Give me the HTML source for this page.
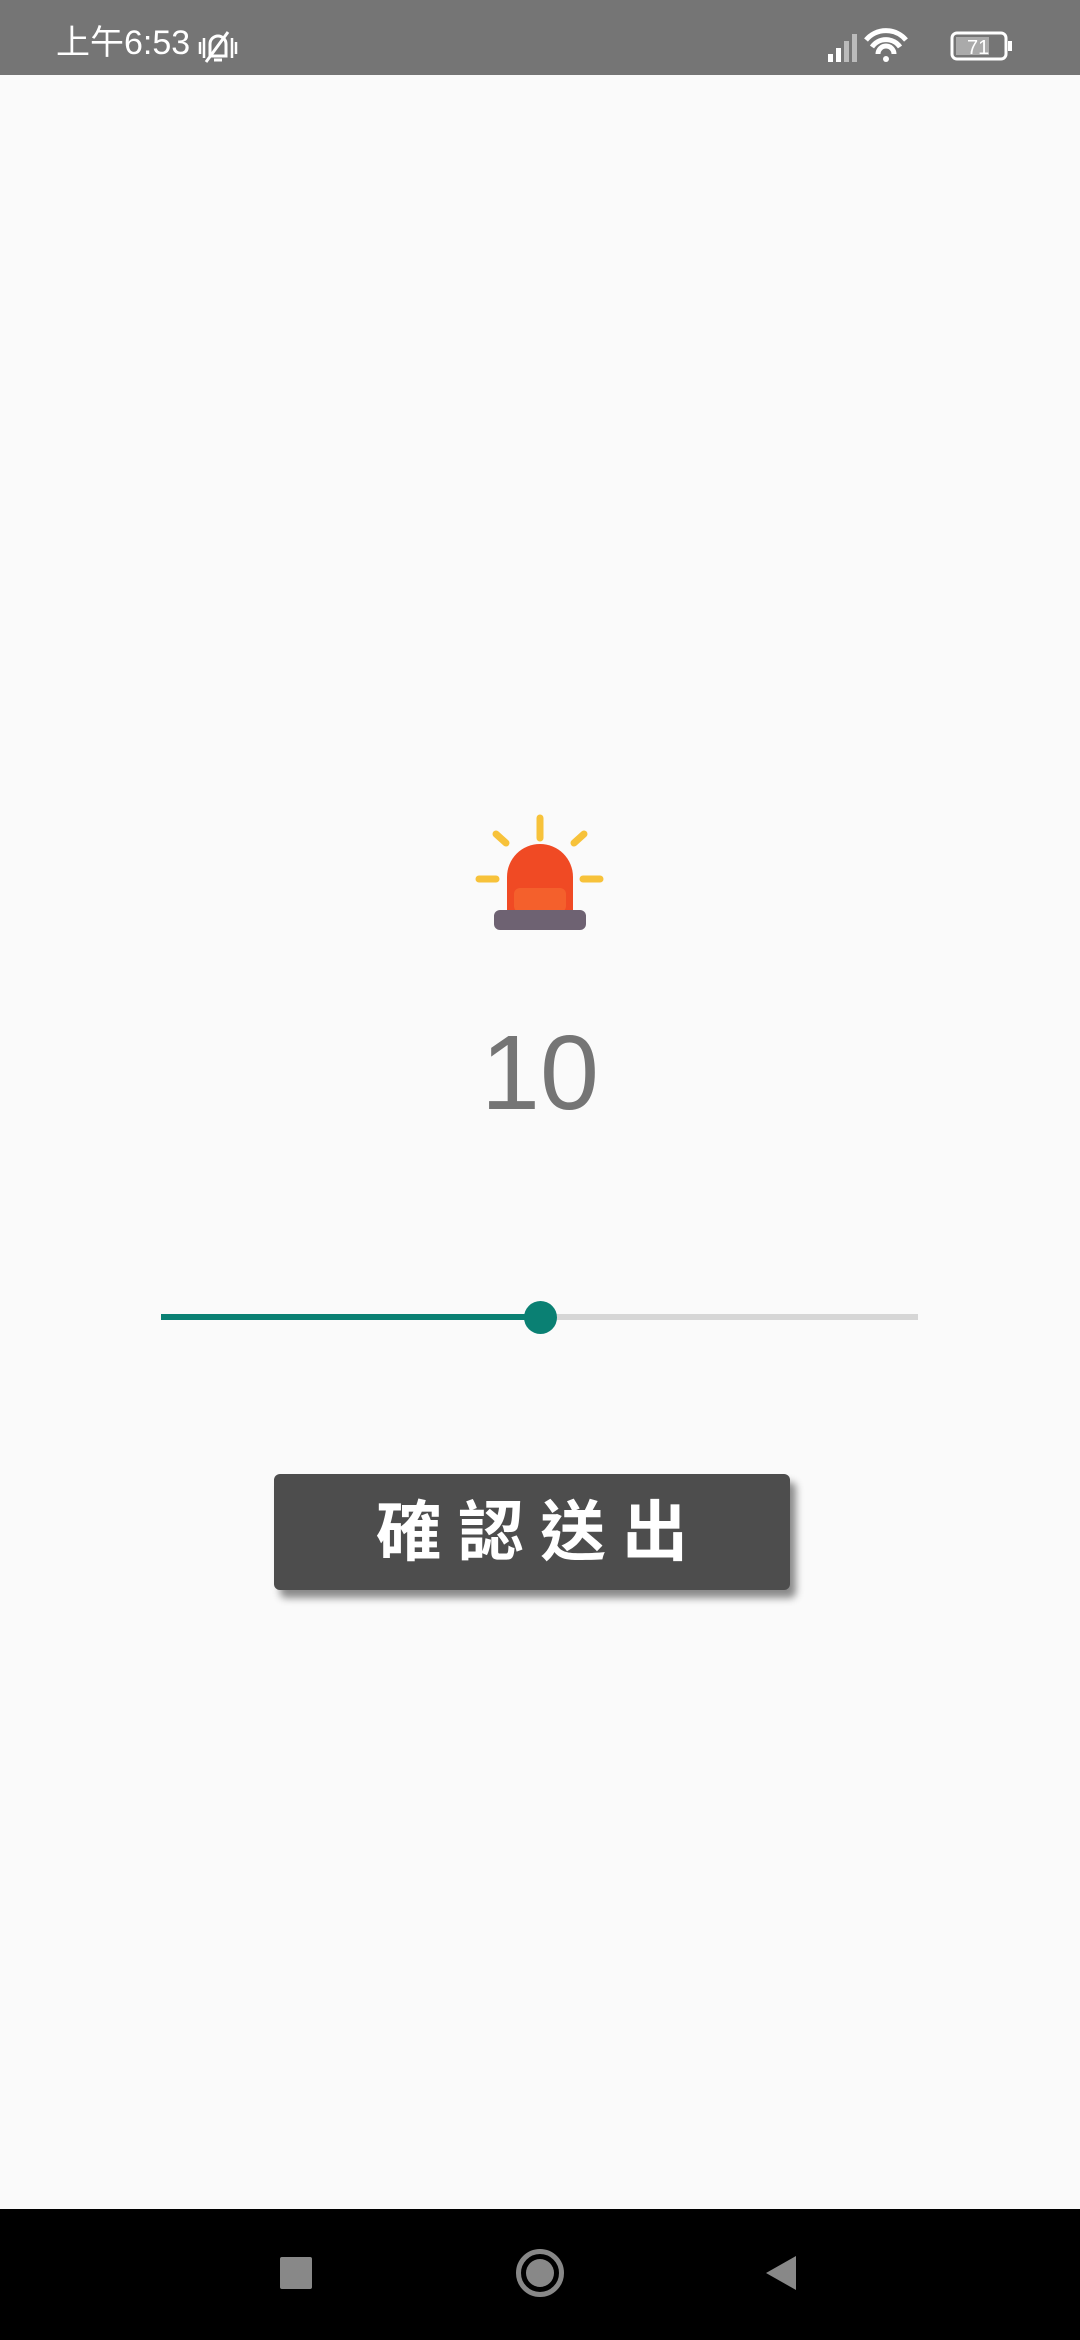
<!DOCTYPE html>
<html><head><meta charset="utf-8"><style>
html,body{margin:0;padding:0;width:1080px;height:2340px;background:#fafafa;overflow:hidden;font-family:"Liberation Sans","Noto Sans CJK TC",sans-serif;position:relative}
.sb{position:absolute;left:0;top:0;width:1080px;height:75px;background:#757575;color:#fff}
.time{position:absolute;left:56px;top:26px;font-size:34px;line-height:1}
.nav{position:absolute;left:0;top:2209px;width:1080px;height:131px;background:#000}
.num{position:absolute;left:0;width:1080px;top:1010px;text-align:center;font-size:106px;color:#757575;line-height:1.2}
.btn{position:absolute;left:274px;top:1474px;width:516px;height:116px;background:#4d4d4d;border-radius:6px;box-shadow:6px 8px 8px rgba(0,0,0,.45);color:#fff;font-weight:bold;font-size:66px;text-align:center;line-height:116px;letter-spacing:16px;text-indent:16px}
</style></head><body>
<div class="sb">
<div class="time">上午6:53</div>
<svg style="position:absolute;left:196px;top:28px" width="44" height="40" viewBox="0 0 44 40"><path d="M14 28 V16 a8 8 0 0 1 16 0 V28 Z M18 32 h8" stroke="#fff" stroke-width="3" fill="none"/><path d="M10 34 L32 4" stroke="#fff" stroke-width="3"/><path d="M4 14v12M8 10v20M36 10v20M40 14v12" stroke="#fff" stroke-width="2.5"/></svg>
<svg style="position:absolute;left:826px;top:28px" width="200" height="36" viewBox="0 0 200 36">
<rect x="2" y="26" width="5" height="8" fill="#fff"/><rect x="10" y="20" width="5" height="14" fill="#fff"/><rect x="18" y="13" width="5" height="21" fill="#bbb"/><rect x="26" y="6" width="5" height="28" fill="#bbb"/>
<path d="M40 12 a26 26 0 0 1 40 0 M46 19 a17 17 0 0 1 28 0 M52 26 a8 8 0 0 1 16 0" stroke="#fff" stroke-width="5" fill="none"/><circle cx="60" cy="31" r="3" fill="#fff"/>
<rect x="126" y="5" width="54" height="26" rx="5" stroke="#fff" stroke-width="3" fill="none"/><rect x="130" y="9" width="33" height="18" fill="#aaa"/><rect x="182" y="13" width="4" height="10" fill="#fff"/>
<text x="141" y="26" font-size="20" fill="#fff" font-family="Liberation Sans">71</text></svg>
</div>
<svg style="position:absolute;left:470px;top:810px" width="140" height="125" viewBox="0 0 140 125">
<g stroke="#f7c23a" stroke-width="7" stroke-linecap="round"><path d="M70 8v20M26 24l10 9M114 24l-10 9M9 69h17M113 69h17"/></g>
<path d="M37 102V67a33 33 0 0 1 66 0v35z" fill="#f04a24"/>
<rect x="44" y="78" width="52" height="24" rx="6" fill="#f56a30" opacity=".7"/>
<rect x="24" y="100" width="92" height="20" rx="6" fill="#6e6272"/></svg>
<div class="num">10</div>
<div style="position:absolute;left:161px;top:1314px;width:379px;height:6px;background:#0a8073"></div>
<div style="position:absolute;left:540px;top:1314px;width:378px;height:6px;background:#d6d6d6"></div>
<div style="position:absolute;left:524px;top:1301px;width:33px;height:33px;border-radius:50%;background:#0a8073"></div>
<div class="btn">確認送出</div>
<div class="nav">
<div style="position:absolute;left:280px;top:48px;width:32px;height:32px;background:#888;border-radius:2px"></div>
<div style="position:absolute;left:516px;top:40px;width:48px;height:48px;border:5px solid #888;border-radius:50%;box-sizing:border-box"></div>
<div style="position:absolute;left:526px;top:50px;width:28px;height:28px;background:#888;border-radius:50%"></div>
<svg style="position:absolute;left:762px;top:45px" width="36" height="38"><path d="M34 2 V36 L4 19Z" fill="#888"/></svg>
</div>
</body></html>
